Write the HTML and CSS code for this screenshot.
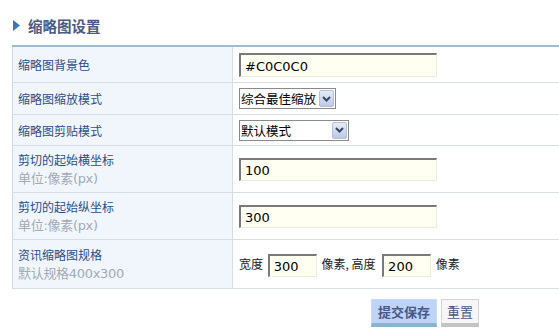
FILE: index.html
```html
<!DOCTYPE html>
<html lang="zh-CN">
<head>
  <meta charset="UTF-8">
  <title>缩略图设置</title>
  <link rel="stylesheet" href="styles.css">
</head>
<body>
  <div class="page">

    <!-- Heading -->
    <div class="title">
      <svg class="arrow" width="7" height="11" viewBox="0 0 7 11"><path d="M0 0 L7 5.5 L0 11 Z" fill="#3f74b8"/></svg>
      <span>缩略图设置</span>
    </div>

    <!-- Settings table -->
    <table class="settings">
      <tr class="row-1">
        <td class="label">缩略图背景色</td>
        <td class="field"><input type="text" class="txt" value="#C0C0C0"></td>
      </tr>
      <tr class="row-2">
        <td class="label">缩略图缩放模式</td>
        <td class="field">
          <span class="sel sel-fit">
            <select><option>综合最佳缩放</option></select>
            <span class="sel-btn"><svg width="9" height="6" viewBox="0 0 9 6"><path d="M1 1 L4.5 4.5 L8 1" fill="none" stroke="#3a4660" stroke-width="2"/></svg></span>
          </span>
        </td>
      </tr>
      <tr class="row-3">
        <td class="label">缩略图剪贴模式</td>
        <td class="field">
          <span class="sel sel-cut">
            <select><option>默认模式</option></select>
            <span class="sel-btn"><svg width="9" height="6" viewBox="0 0 9 6"><path d="M1 1 L4.5 4.5 L8 1" fill="none" stroke="#3a4660" stroke-width="2"/></svg></span>
          </span>
        </td>
      </tr>
      <tr class="row-tall">
        <td class="label">剪切的起始横坐标<div class="hint">单位:像素(px)</div></td>
        <td class="field"><input type="text" class="txt" value="100"></td>
      </tr>
      <tr class="row-tall">
        <td class="label">剪切的起始纵坐标<div class="hint">单位:像素(px)</div></td>
        <td class="field"><input type="text" class="txt" value="300"></td>
      </tr>
      <tr class="row-tall">
        <td class="label">资讯缩略图规格<div class="hint">默认规格400x300</div></td>
        <td class="field size">
          宽度 <input type="text" class="txt small" value="300"> 像素, 高度 <input type="text" class="txt small" value="200"> 像素
        </td>
      </tr>
    </table>

    <!-- Buttons -->
    <div class="actions">
      <button class="btn-save">提交保存</button>
      <button class="btn-reset">重置</button>
    </div>

  </div>
</body>
</html>
```

FILE: styles.css
```css
body {
  margin: 0;
  background: #fff;
  font-family: "Noto Sans CJK SC", "DejaVu Sans", sans-serif;
  font-size: 12px;
  overflow: hidden;
}

.page {
  padding: 17px 0 0 12px;
}

.title {
  display: flex;
  align-items: center;
  gap: 8px;
  height: 17px;
  padding-left: 1px;
  font-size: 14.5px;
  font-weight: bold;
  color: #4b5a86;
  margin-bottom: 11px;
}

.arrow {
  display: block;
}

.settings {
  width: 547px;
  border-collapse: collapse;
  border-top: 2px solid #9dbdca;
  border-left: 1px solid #cdd8e4;
}

.settings td {
  border-bottom: 1px solid #d6dfe8;
  padding: 0;
  vertical-align: middle;
}

.label {
  width: 214px;
  padding-left: 5px !important;
  background: #f1f6fd;
  border-right: 1px solid #d6dfe8;
  color: #2b4e88;
  line-height: 19px;
}

.hint {
  color: #a2aab4;
  font-size: 13px;
  font-family: "DejaVu Sans", "Noto Sans CJK SC", sans-serif;
  letter-spacing: -0.3px;
}

.field {
  padding-left: 6px !important;
}

.row-1 td { height: 35px; }
.row-2 td { height: 31px; }
.row-3 td { height: 30px; }
.row-tall td { height: 46px; }

.txt {
  display: block;
  box-sizing: border-box;
  width: 198px;
  height: 24px;
  margin: 0;
  padding: 2px 4px 0;
  background: #fffff2;
  border: 1px solid;
  border-top: 2px solid #7a7a7a;
  border-left: 2px solid #7a7a7a;
  border-color: #7a7a7a #ececdc #ececdc #7a7a7a;
  font-family: "DejaVu Sans", sans-serif;
  font-size: 13px;
  color: #000;
  outline: none;
}

.row-tall .txt {
  height: 23px;
}

.size {
  color: #222;
  padding-top: 2px !important;
}

.size .txt.small {
  display: inline-block;
  vertical-align: middle;
  width: 49px;
  height: 23px;
  margin: 0 2px;
}

.size .txt.small + .txt.small {
  margin-left: 4px;
}

.sel {
  display: inline-flex;
  align-items: center;
  box-sizing: border-box;
  height: 21px;
  border: 1px solid #8a8a8a;
  background: #fff;
  vertical-align: middle;
}

.sel select {
  appearance: none;
  -webkit-appearance: none;
  border: none;
  background: transparent;
  padding: 0 0 0 1px;
  margin: 0;
  height: 19px;
  font-family: "Noto Sans CJK SC", sans-serif;
  font-size: 12.5px;
  color: #000;
  outline: none;
}

.sel-fit { width: 97px; }
.sel-fit select { width: 79px; }
.sel-cut { width: 110px; }
.sel-cut select { width: 92px; }

.sel-btn {
  display: flex;
  align-items: center;
  justify-content: center;
  box-sizing: border-box;
  width: 15px;
  height: 17px;
  margin-left: auto;
  margin-right: 1px;
  background: linear-gradient(#e6ebf7, #bcc8e4);
  border: 1px solid #b4c0da;
  border-radius: 2px;
}

.actions {
  display: flex;
  gap: 4px;
  padding: 10px 0 0 359px;
}

.actions button {
  box-sizing: border-box;
  height: 28px;
  padding: 0;
  font-family: "Noto Sans CJK SC", sans-serif;
  font-size: 13px;
  color: #4a5888;
  cursor: pointer;
}

.btn-save {
  width: 66px;
  background: #bdd4f6;
  border: 1px solid #c8dcf6;
  border-bottom: 4px solid #89b4d2;
  font-weight: bold;
}

.btn-reset {
  width: 38px;
  background: #f6f6f6;
  border: 1px solid #d4d4d4;
  border-bottom: 4px solid #c4c4c4;
}
```
